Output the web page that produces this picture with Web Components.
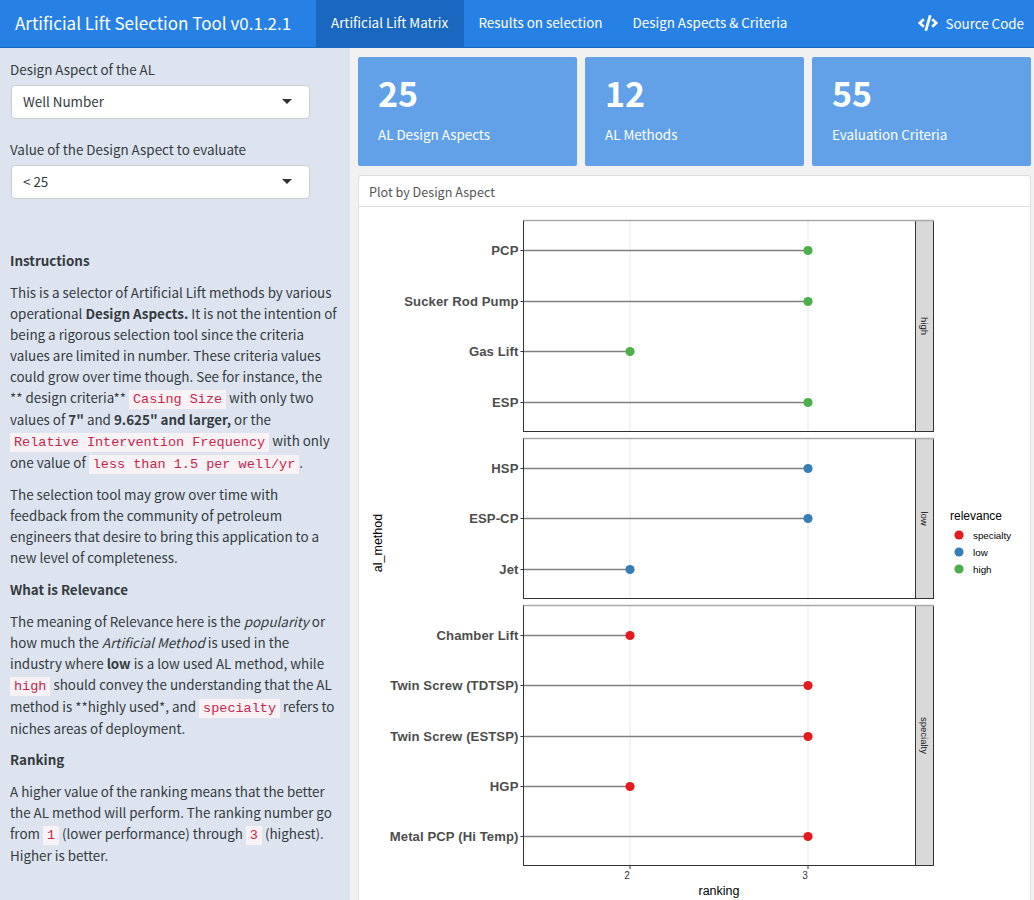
<!DOCTYPE html>
<html>
<head>
<meta charset="utf-8">
<title>Artificial Lift Selection Tool</title>
<style>
  html, body { margin: 0; height: 900px; overflow: hidden; }
  body { font-family: "Noto Sans CJK SC", "Noto Sans", sans-serif; font-size: 13.4px; line-height: 21px; color: #343a40; }
</style>
</head>
<body>
<app-navbar>
  <nav-item active>Artificial Lift Matrix</nav-item>
  <nav-item>Results on selection</nav-item>
  <nav-item>Design Aspects &amp; Criteria</nav-item>
</app-navbar>
<app-layout>
  <side-bar slot="side">
    <select-input label="Design Aspect of the AL" value="Well Number"></select-input>
    <select-input label="Value of the Design Aspect to evaluate" value="&lt; 25"></select-input>
    <side-notes></side-notes>
  </side-bar>
  <value-box value="25" caption="AL Design Aspects"></value-box>
  <value-box value="12" caption="AL Methods"></value-box>
  <value-box value="55" caption="Evaluation Criteria"></value-box>
  <plot-card slot="card" title="Plot by Design Aspect">
    <relevance-plot></relevance-plot>
  </plot-card>
</app-layout>

<script>
/**
 * Small helper, every element below is a template in an open shadow root.
 */
function makeTemplate (html) {
  const template = document.createElement('template')
  template.innerHTML = html
  return template
}

function escapeText (str) {
  return String(str).replace(/&/g, '&amp;').replace(/</g, '&lt;')
}

const navbarTemplate = makeTemplate(`
  <style>
    :host { display: flex; height: 48px; background: #2780e3; color: #fff; white-space: nowrap; box-shadow: inset 0 -1px 0 #1967be; }
    .brand { width: 316px; box-sizing: border-box; padding-left: 15px; font-size: 17px; line-height: 45px; }
    nav { display: flex; flex: 1; }
    .source { margin-left: auto; display: flex; align-items: center; gap: 7px; padding: 0 10px 2px 0; }
    svg { width: 20px; height: 16px; fill: #fff; }
  </style>
  <div class="brand">Artificial Lift Selection Tool v0.1.2.1</div>
  <nav><slot></slot></nav>
  <div class="source">
    <svg viewBox="0 0 640 512"><path d="M278.9 511.5l-61-17.7c-6.4-1.8-10-8.5-8.2-14.9L346.2 8.7c1.8-6.4 8.5-10 14.9-8.2l61 17.7c6.4 1.8 10 8.5 8.2 14.9L293.8 503.3c-1.9 6.4-8.5 10.1-14.9 8.2zm-114-112.2l43.5-46.4c4.6-4.9 4.3-12.7-.8-17.2L117 256l90.6-79.7c5.1-4.5 5.5-12.3.8-17.2l-43.5-46.4c-4.5-4.8-12.1-5.1-17-.5L3.8 247.2c-5.1 4.7-5.1 12.8 0 17.5l144.1 135.1c4.9 4.6 12.5 4.4 17-.5zm327.2.6l144.1-135.1c5.1-4.7 5.1-12.8 0-17.5L492.1 112.1c-4.8-4.5-12.4-4.3-17 .5L431.6 159c-4.6 4.9-4.3 12.7.8 17.2L523 256l-90.6 79.7c-5.1 4.5-5.5 12.3-.8 17.2l43.5 46.4c4.5 4.9 12.1 5.1 17 .6z"/></svg>
    <span>Source Code</span>
  </div>
`)

customElements.define('app-navbar',
  class extends HTMLElement {
    constructor () {
      super()
      this.attachShadow({ mode: 'open' })
        .appendChild(navbarTemplate.content.cloneNode(true))
    }
  }
)

const navItemTemplate = makeTemplate(`
  <style>
    :host { display: block; padding: 0 15px; line-height: 45px; height: 47px; color: #fff; }
    :host([active]) { background: #1967be; padding-right: 15.4px; }
  </style>
  <slot></slot>
`)

customElements.define('nav-item',
  class extends HTMLElement {
    constructor () {
      super()
      this.attachShadow({ mode: 'open' })
        .appendChild(navItemTemplate.content.cloneNode(true))
    }
  }
)

const layoutTemplate = makeTemplate(`
  <style>
    :host { display: grid; grid-template-columns: 350px 1fr; height: 852px; overflow: hidden; background: #f1f1f1; }
    .main { padding: 9px 3px 0 8px; display: flex; flex-direction: column; gap: 9px; }
    .boxes { display: grid; grid-template-columns: repeat(3, 1fr); gap: 8px; }
  </style>
  <slot name="side"></slot>
  <div class="main">
    <div class="boxes"><slot></slot></div>
    <slot name="card"></slot>
  </div>
`)

customElements.define('app-layout',
  class extends HTMLElement {
    constructor () {
      super()
      this.attachShadow({ mode: 'open' })
        .appendChild(layoutTemplate.content.cloneNode(true))
    }
  }
)

const sideBarTemplate = makeTemplate(`
  <style>
    :host { display: block; background: #dde4ef; padding: 11px 10px 0; box-sizing: border-box; height: 852px; overflow: hidden; }
  </style>
  <slot></slot>
`)

customElements.define('side-bar',
  class extends HTMLElement {
    constructor () {
      super()
      this.attachShadow({ mode: 'open' })
        .appendChild(sideBarTemplate.content.cloneNode(true))
    }
  }
)

const selectTemplate = makeTemplate(`
  <style>
    :host { display: block; width: 300px; margin-bottom: 20px; }
    label { display: block; margin-bottom: 5px; }
    .box { height: 34px; box-sizing: border-box; margin-left: 1px; background: #fff; border: 1px solid #ccc; border-radius: 4px; padding: 0 11px 2px; display: flex; align-items: center; justify-content: space-between; color: #343a40; }
    .caret { width: 0; height: 0; border-top: 5px solid #333; border-left: 5px solid transparent; border-right: 5px solid transparent; margin-right: 6px; }
  </style>
  <label></label>
  <div class="box"><span class="value"></span><span class="caret"></span></div>
`)

customElements.define('select-input',
  class extends HTMLElement {
    constructor () {
      super()
      this.attachShadow({ mode: 'open' })
        .appendChild(selectTemplate.content.cloneNode(true))
      this.shadowRoot.querySelector('label').textContent = this.getAttribute('label')
      this.shadowRoot.querySelector('.value').textContent = this.getAttribute('value')
    }
  }
)

const notesTemplate = makeTemplate(`
  <style>
    :host { display: block; width: 328px; margin-top: 51px; }
    h4 { font-size: 13.4px; line-height: 21px; font-weight: 700; margin: 0 0 10.5px; }
    p { margin: 0 0 10.8px; }
    code { font-family: "Liberation Mono", monospace; font-size: 13.5px; line-height: 18px; color: #c7254e; background: #f9f2f4; padding: 2px 4px; }
  </style>
  <h4>Instructions</h4>
  <p>This is a selector of Artificial Lift methods by various operational <b>Design Aspects.</b> It is not the intention of being a rigorous selection tool since the criteria values are limited in number. These criteria values could grow over time though. See for instance, the **&nbsp;design criteria** <code>Casing Size</code> with only two values of <b>7"</b> and <b>9.625" and larger,</b> or the <code>Relative Intervention Frequency</code> with only one value of <code>less than 1.5 per well/yr</code>.</p>
  <p>The selection tool may grow over time with feedback from the community of petroleum engineers that desire to bring this application to a new level of completeness.</p>
  <h4>What is Relevance</h4>
  <p>The meaning of Relevance here is the <i>popularity</i> or how much the <i>Artificial Method</i> is used in the industry where <b>low</b> is a low used AL method, while <code>high</code> should convey the understanding that the AL method is **highly used*, and <code>specialty</code> refers to niches areas of deployment.</p>
  <h4>Ranking</h4>
  <p>A higher value of the ranking means that the better the AL method will perform. The ranking number go from <code>1</code> (lower performance) through <code>3</code> (highest). Higher is better.</p>
`)

customElements.define('side-notes',
  class extends HTMLElement {
    constructor () {
      super()
      this.attachShadow({ mode: 'open' })
        .appendChild(notesTemplate.content.cloneNode(true))
    }
  }
)

const valueBoxTemplate = makeTemplate(`
  <style>
    :host { display: block; height: 109px; box-sizing: border-box; padding: 15px 20px 0; background: #62a1e7; color: #fff; border-radius: 2px; }
    .value { font-size: 34px; font-weight: 700; line-height: 42px; }
    .caption { margin-top: 10px; }
  </style>
  <div class="value"></div>
  <div class="caption"></div>
`)

customElements.define('value-box',
  class extends HTMLElement {
    constructor () {
      super()
      this.attachShadow({ mode: 'open' })
        .appendChild(valueBoxTemplate.content.cloneNode(true))
      this.shadowRoot.querySelector('.value').textContent = this.getAttribute('value')
      this.shadowRoot.querySelector('.caption').textContent = this.getAttribute('caption')
    }
  }
)

const cardTemplate = makeTemplate(`
  <style>
    :host { display: block; background: #fff; border: 1px solid #ddd; border-radius: 3px; height: 760px; }
    header { height: 30px; line-height: 31px; padding-left: 10px; font-size: 12.6px; color: #555; border-bottom: 1px solid #ddd; }
  </style>
  <header></header>
  <slot></slot>
`)

customElements.define('plot-card',
  class extends HTMLElement {
    constructor () {
      super()
      this.attachShadow({ mode: 'open' })
        .appendChild(cardTemplate.content.cloneNode(true))
      this.shadowRoot.querySelector('header').textContent = this.getAttribute('title')
    }
  }
)

// Data read off the chart. y is the page row of the lollipop.
const RED = '#e41a1c'
const BLUE = '#377eb8'
const GREEN = '#4daf4a'
const PANELS = [
  { top: 220, bottom: 432, name: 'high', color: GREEN, rows: [['PCP', 250, 3], ['Sucker Rod Pump', 301, 3], ['Gas Lift', 351, 2], ['ESP', 402, 3]] },
  { top: 438, bottom: 599, name: 'low', color: BLUE, rows: [['HSP', 468, 3], ['ESP-CP', 518, 3], ['Jet', 569, 2]] },
  { top: 605, bottom: 866, name: 'specialty', color: RED, rows: [['Chamber Lift', 635, 2], ['Twin Screw (TDTSP)', 685, 3], ['Twin Screw (ESTSP)', 736, 3], ['HGP', 786, 2], ['Metal PCP (Hi Temp)', 836, 3]] }
]
const LEFT = 523.5
const RIGHT = 915
const STRIP = 934
const RANK_X = { 2: 630, 3: 808 }

function panelSvg (panel) {
  const { top, bottom, name, color, rows } = panel
  let out = ''
  for (const x of Object.values(RANK_X)) {
    out += `<line x1="${x}" x2="${x}" y1="${top}" y2="${bottom}" stroke="#ebebeb" stroke-width="1.2"/>`
  }
  for (const [label, y, rank] of rows) {
    const x = RANK_X[rank]
    out += `<line x1="520.5" x2="${LEFT}" y1="${y + 0.5}" y2="${y + 0.5}" stroke="#333" stroke-width="1"/>`
    out += `<text class="axis" x="518.5" y="${y + 5}" text-anchor="end">${escapeText(label)}</text>`
    out += `<line x1="${LEFT}" x2="${x}" y1="${y + 0.5}" y2="${y + 0.5}" stroke="#808080" stroke-width="1.6"/>`
    out += `<circle cx="${x}" cy="${y + 0.5}" r="4.6" fill="${color}"/>`
  }
  // strip and frame
  out += `<rect x="${RIGHT}" y="${top}" width="${STRIP - RIGHT}" height="${bottom - top}" fill="#d9d9d9"/>`
  out += `<path d="M${LEFT} ${top} V${bottom} M${RIGHT + 0.5} ${top} V${bottom} M${STRIP - 0.5} ${top} V${bottom}" stroke="#333" fill="none"/>`
  out += `<path d="M${LEFT} ${bottom - 0.5} H${STRIP}" stroke="#333" stroke-width="1.2" fill="none"/>`
  out += `<path d="M${LEFT} ${top + 0.5} H${STRIP}" stroke="#aaa" stroke-width="1.5" fill="none"/>`
  const mid = (top + bottom) / 2
  out += `<text class="strip" transform="translate(921 ${mid}) rotate(90)" text-anchor="middle">${name}</text>`
  return out
}

function legendSvg () {
  let out = '<text class="legend-title" x="950" y="520">relevance</text>'
  const entries = [['specialty', RED, 535], ['low', BLUE, 552], ['high', GREEN, 569]]
  for (const [label, color, y] of entries) {
    out += `<circle cx="959" cy="${y}" r="4.6" fill="${color}"/>`
    out += `<text class="legend" x="973" y="${y + 4}">${label}</text>`
  }
  return out
}

const plotTemplate = makeTemplate(`
  <style>
    :host { display: block; }
    svg { display: block; font-family: "Liberation Sans", Arial, sans-serif; }
    .axis { font-size: 13.1px; font-weight: 700; letter-spacing: 0.1px; fill: #4d4d4d; }
    .tick { font-size: 10px; fill: #333; }
    .title { font-size: 12.5px; fill: #000; }
    .strip { font-size: 9.5px; fill: #1a1a1a; }
    .legend-title { font-size: 12px; fill: #000; }
    .legend { font-size: 9.8px; fill: #000; }
  </style>
  <svg width="671" height="693" viewBox="359 207 671 693">
    ${PANELS.map(panelSvg).join('')}
    <line x1="630" x2="630" y1="866" y2="869" stroke="#333"/>
    <line x1="808" x2="808" y1="866" y2="869" stroke="#333"/>
    <text class="tick" x="627" y="879" text-anchor="middle">2</text>
    <text class="tick" x="805" y="879" text-anchor="middle">3</text>
    <text class="title" x="719" y="895" text-anchor="middle">ranking</text>
    <text class="title" transform="translate(382 543) rotate(-90)" text-anchor="middle">al_method</text>
    ${legendSvg()}
  </svg>
`)

customElements.define('relevance-plot',
  class extends HTMLElement {
    constructor () {
      super()
      this.attachShadow({ mode: 'open' })
        .appendChild(plotTemplate.content.cloneNode(true))
    }
  }
)
</script>
</body>
</html>
